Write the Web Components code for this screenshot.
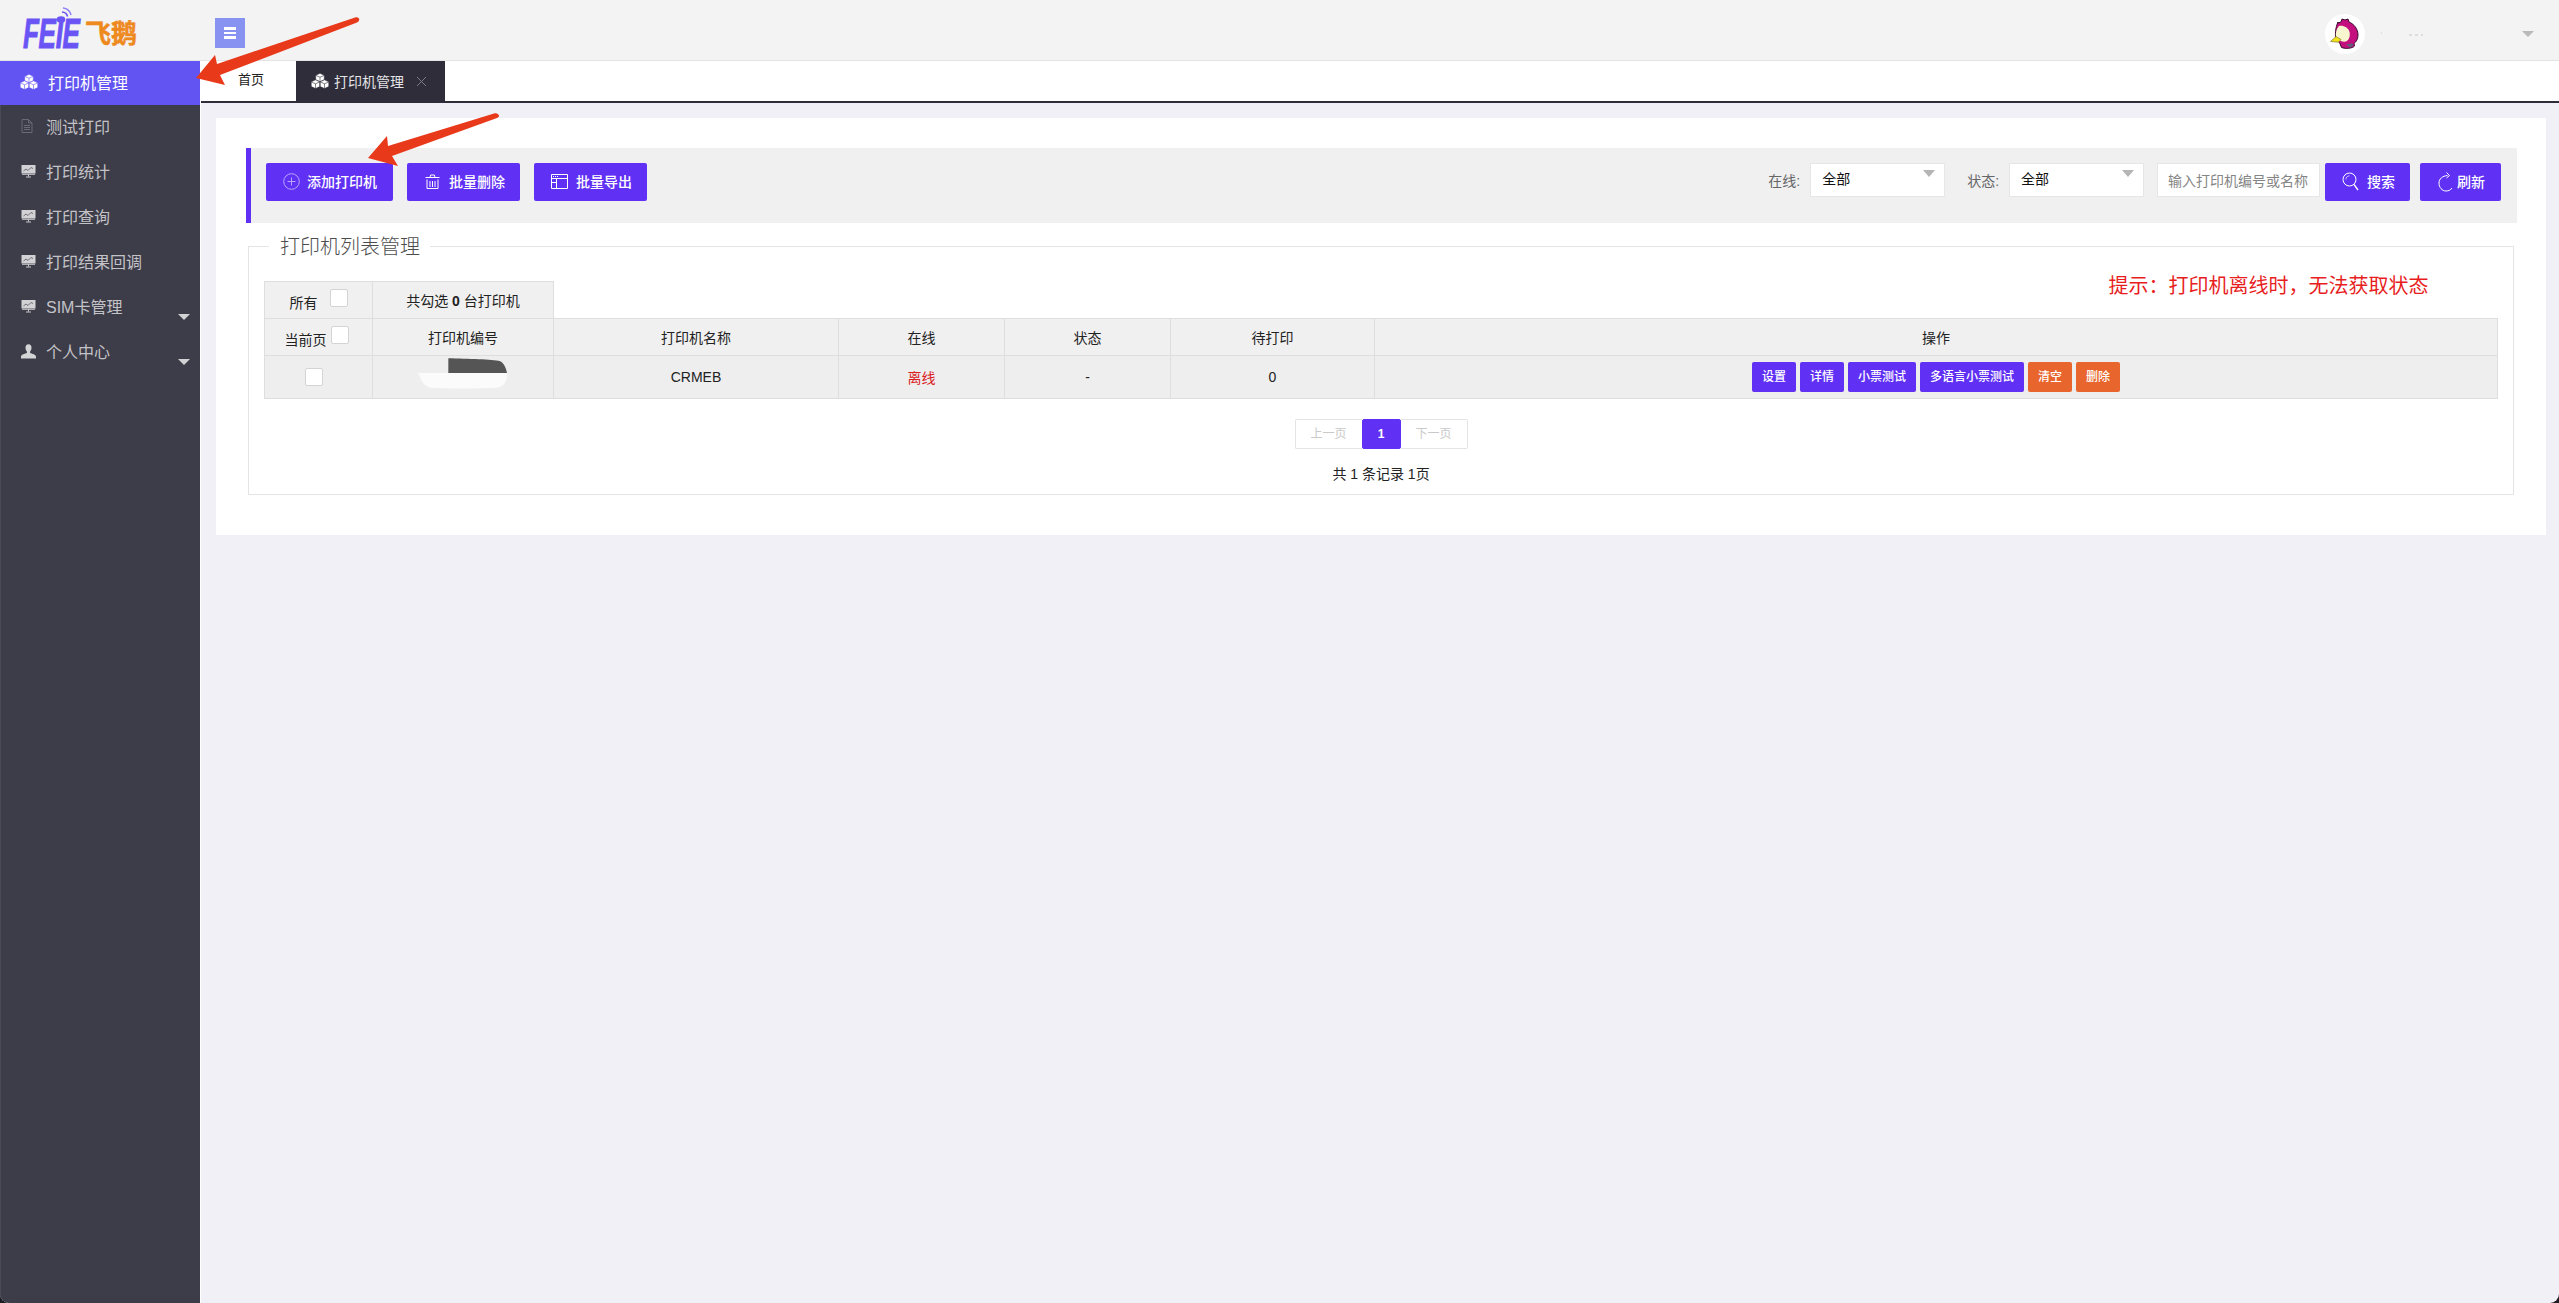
<!DOCTYPE html>
<html lang="zh-CN">
<head>
<meta charset="utf-8">
<title>打印机管理</title>
<style>
html,body{margin:0;height:100%;background:#1d1c22;overflow:hidden}
body{font-family:"Liberation Sans","Noto Sans CJK SC",sans-serif;font-size:14px;color:#222}
</style>
</head>
<body>
<feie-app>
  <feie-header slot="header"></feie-header>
  <feie-sidebar slot="side">
    <side-item active icon="cubes">打印机管理</side-item>
    <side-item icon="doc">测试打印</side-item>
    <side-item icon="chart">打印统计</side-item>
    <side-item icon="chart">打印查询</side-item>
    <side-item icon="chart">打印结果回调</side-item>
    <side-item icon="chart" caret>SIM卡管理</side-item>
    <side-item icon="user" caret>个人中心</side-item>
  </feie-sidebar>
  <feie-tabs slot="tabs"></feie-tabs>
  <feie-card slot="main">
    <feie-toolbar></feie-toolbar>
    <feie-panel></feie-panel>
  </feie-card>
  <feie-arrows slot="over"></feie-arrows>
</feie-app>

<script>
const ICONS = {
  cubes:`<svg width="18" height="16" viewBox="0 0 18 16"><g fill="currentColor" stroke="var(--cut,#6154f2)" stroke-width=".6" stroke-linejoin="round"><path d="M9 .3l4.300 2v4.500L9 8.800 4.700 6.800V2.300z"/><path d="M4.700 2.300L9 4.300l4.300-2M9 4.300v4.500" fill="none"/><path d="M4.500 6.800l4.300 2v4.800l-4.300 2-4.300-2V8.800z"/><path d="M.2 8.800l4.300 2 4.300-2M4.500 10.800v4.800" fill="none"/><path d="M13.500 6.800l4.300 2v4.800l-4.300 2-4.300-2V8.800z"/><path d="M9.200 8.800l4.300 2 4.300-2M13.500 10.800v4.800" fill="none"/></g></svg>`,
  doc:`<svg width="12" height="14" viewBox="0 0 12 14" fill="none" stroke="#6a6975"><path d="M1 .5h6.500L11 4v9.500H1z"/><path d="M7.500.5V4H11M3 6.500h6M3 8.500h6M3 10.500h6"/></svg>`,
  chart:`<svg width="15" height="14" viewBox="0 0 15 14"><path d="M.5 1h14v8.500H.5z" fill="#d2d2d5"/><path d="M2.500 7l2.500-2 2 1.500L10 3.500l2 1" fill="none" stroke="#6e6d77" stroke-width="1"/><path d="M1 10.300h13M7.500 10v2.500M5 13h5" stroke="#c9c9cc" fill="none"/></svg>`,
  user:`<svg width="15" height="15" viewBox="0 0 15 15"><path d="M7.500 .3c2 0 3 1.500 3 3.500 0 1.600-.7 3-1.400 3.800v1.300c1.800.7 5.900 1.600 5.900 3.600v2H0v-2c0-2 4.100-2.900 5.900-3.600V7.600C5.200 6.800 4.500 5.400 4.500 3.800c0-2 1-3.500 3-3.500z" fill="#d4d4d6"/></svg>`,
  plus:`<svg width="17" height="17" viewBox="0 0 17 17" fill="none" stroke="#b9a6fb"><circle cx="8.500" cy="8.500" r="7.800"/><path d="M8.500 4.500v8M4.500 8.500h8"/></svg>`,
  trash:`<svg width="15" height="15" viewBox="0 0 15 15" fill="none" stroke="#fff"><path d="M.5 3.500h14M5 3.500l.6-2.500h3.800l.6 2.500M2 5.500v9h11v-9M5 7v6M7.500 7v6M10 7v6"/></svg>`,
  win:`<svg width="17" height="15" viewBox="0 0 17 15" fill="none" stroke="#fff"><path d="M.5.500h16v14H.5zM.5 4.500h16M5.500 4.500v10M.5 8.500h5"/><path d="M2 2.500h1M4 2.500h1M6 2.500h1" stroke-width="1"/></svg>`,
  search:`<svg width="17" height="19" viewBox="0 0 17 19" fill="none" stroke="#fff"><circle cx="7.500" cy="7.500" r="6.500"/><path d="M3.800 7.500c0-2 1.600-3.700 3.700-3.700" stroke="#c9b9fd"/><path d="M12 12.500l4 5.500" stroke-width="1.300"/></svg>`,
  refresh:`<svg width="15" height="21" viewBox="0 0 15 21" fill="none" stroke="#fff"><path d="M9.500 4.500C4.500 5 1 7.800 1 12c0 4.400 3 8 7 8 2.600 0 4.700-1 6-3"/><path d="M8.500 1.500l3 3-3 2.500" stroke-width="1"/></svg>`
};
function define(name, css, html){
  customElements.define(name, class extends HTMLElement{
    constructor(){super();const r=this.attachShadow({mode:'open'});
      const h=typeof html==='function'?html(this):html;
      r.innerHTML=`<style>${css}</style>${h}`;}
  });
}

define('feie-app',`
  :host{display:grid;grid-template-columns:200px 1fr;grid-template-rows:61px 42px 1fr;width:100%;height:100vh;position:relative;
    border-radius:0 0 9px 9px;overflow:hidden;background:#f0f0f6}
  .h{grid-column:1/3}
  .s{grid-row:2/4;display:flex}
  .t{border-left:1px solid #fff;display:flex}
  .m{border-left:1px solid #fff;padding:15px 15px 0 15px;min-height:0}
`,`<div class="h"><slot name="header"></slot></div>
   <div class="s"><slot name="side"></slot></div>
   <div class="t"><slot name="tabs"></slot></div>
   <div class="m"><slot name="main"></slot></div>
   <slot name="over"></slot>`);

define('feie-header',`
  :host{display:flex;align-items:flex-start;height:61px;box-sizing:border-box;background:#f3f3f4;border-bottom:1px solid #e4e4e6}
  .logo{position:relative;width:215px;height:60px;flex:none;display:flex;align-items:flex-start}
  .fe{display:block;margin:11px 0 0 23px;width:86px;font:italic 700 42px/46px "Liberation Sans",sans-serif;color:#6a55f4;
      -webkit-text-stroke:1px #6a55f4;transform:scaleX(.62);transform-origin:0 0;letter-spacing:-.5px}
  .cn{display:block;margin:17px 0 0 -24px;font:700 26px/30px "Noto Sans CJK SC",sans-serif;color:#ee8a1d;white-space:nowrap;-webkit-text-stroke:.5px #ee8a1d}
  .wifi{position:absolute;left:56px;top:6px}
  .menu{width:30px;height:30px;margin-top:18px;background:#8892f0;display:flex;flex-direction:column;justify-content:center;align-items:center;gap:2px}
  .menu i{display:block;width:12px;height:2.500px;background:#fff}
  .right{margin-left:auto;display:flex;align-items:center;height:60px;padding-right:27px}
  .av{width:40px;height:40px;margin-top:8px}
  .name{width:169px;display:flex;align-items:center;justify-content:flex-end;margin-top:8px}
  .ln{margin-right:91px}
  .caret{width:0;height:0;border:6px solid transparent;border-top:6px solid #b9b9bb;border-bottom:0}
`,`<div class="logo">
     <span class="fe">FEIE</span><span class="cn">飞鹅</span>
     <svg class="wifi" width="18" height="18" viewBox="0 0 18 18" fill="none" stroke="#6a55f4"><ellipse cx="5" cy="13.500" rx="4.300" ry="3.300" fill="#6a55f4" stroke="none"/><path d="M6 6c3 .2 5 2 5.500 4.500" stroke-width="1.700"/><path d="M7 2c4 .4 7 3 8 7" stroke-width="1.500" stroke="#8f80f7"/></svg>
   </div>
   <div class="menu"><i></i><i></i><i></i></div>
   <div class="right">
     <svg class="av" viewBox="0 0 40 40">
       <circle cx="20" cy="20" r="20" fill="#fff"/>
       <path d="M13 9l3-1 1-3 3 1 3-1 1 3c5 2 9 7 9 13 0 4-2 7-4 8.500l.5 2.500c-2 2.500-9 3-13 1.500l-2-5-3-2c-2-5-1-13 1.500-18.500z" fill="#c4107f" stroke="#3a0a2c" stroke-width="1"/>
       <path d="M14 12c4-1 9 1 10.500 6 1 4-.5 8-3.500 9.500-3 .5-7-.5-9.500-3-1.500-4-.5-9 2.500-12.500z" fill="#f8f6cf"/>
       <path d="M11 22.500L5.500 27.500l8 .7 2.500-2.700z" fill="#f2e21a" stroke="#554a10" stroke-width=".5"/>
       <path d="M21 30.500l6-1 1.500 1.500-3 2.500z" fill="#5b6078"/>
     </svg>
     <div class="name"><svg class="ln" width="50" height="6" viewBox="0 0 50 6"><path d="M0 2h1M28 4h3M34 4h3M40 4h2" stroke="#c9c9cb"/></svg><span class="caret"></span></div>
   </div>`);

define('feie-sidebar',`
  :host{display:flex;flex-direction:column;width:200px;background:#3d3c49;box-shadow:inset 1px 0 0 #4a4956}
`,`<slot></slot>`);

define('side-item',`
  :host{display:flex;align-items:center;height:45px;font-size:16px;color:#c3c3c7;white-space:nowrap;box-sizing:border-box;padding:0 0 3px 21px}
  :host([active]){height:44px;background:#6154f2;color:#fff;padding-left:20px;--cut:#6154f2}
  .i{width:25px;flex:none;display:flex;align-items:center}
  :host([active]) .i{width:28px}
  .c{margin-left:auto;margin-right:10px;margin-top:21px;width:0;height:0;border:6px solid transparent;border-top:6px solid #d2d2d5;border-bottom:0}
`,el=>`<span class="i">${ICONS[el.getAttribute('icon')]||''}</span><slot></slot>${el.hasAttribute('caret')?'<span class="c"></span>':''}`);

define('feie-tabs',`
  :host{display:flex;flex:1;height:42px;box-sizing:border-box;background:#fff;border-bottom:2px solid #2f2d3a}
  .home{width:95px;box-sizing:border-box;padding-left:37px;font-size:13px;line-height:38px;color:#222}
  .on{width:149px;box-sizing:border-box;padding-left:15px;background:#2f2d3a;color:#e4e4e6;display:flex;align-items:center;--cut:#2f2d3a;font-size:14px}
  .on svg{flex:none}
  .tx{margin-left:5px}
  .x{margin-left:12px}
`,`<div class="home">首页</div>
   <div class="on"><span style="color:#fff;display:flex">${ICONS.cubes}</span><span class="tx">打印机管理</span>
   <svg class="x" width="11" height="11" viewBox="0 0 11 11" stroke="#7d7c85" fill="none"><path d="M1 1l9 9M10 1l-9 9"/></svg></div>`);

define('feie-card',`
  :host{display:block;background:#fff;padding:30px 29px 40px 30px}
`,`<slot></slot>`);

define('feie-btn',`
  :host{display:inline-flex;align-items:center;box-sizing:border-box;background:var(--b,#6031f5);color:#fff;border-radius:2px;white-space:nowrap;
        height:38px;font-size:14px;font-weight:500;padding-bottom:2px}
  span{display:flex}
`,el=>`<span>${ICONS[el.getAttribute('icon')]||''}</span><slot></slot>`);

define('feie-toolbar',`
  :host{display:flex;align-items:flex-start;height:75px;box-sizing:border-box;background:#f0f0f1;border-left:5px solid #6031f5;padding:15px 16px 0 15px}
  feie-btn{flex:none}
  .add{width:127px;padding-left:17px;gap:7px}
  .del{width:113px;padding-left:18px;margin-left:14px;gap:9px}
  .exp{width:113px;padding-left:17px;margin-left:14px;gap:8px}
  .l{margin-left:auto;line-height:36px;color:#666;font-size:14px;margin-right:10px;white-space:nowrap}
  .l2{margin-left:22px}
  .sel{width:135px;height:34px;box-sizing:border-box;background:#fff;border:1px solid #e6e6e6;padding-left:11px;line-height:31px;color:#111;position:relative;flex:none}
  .sel:after{content:"";position:absolute;right:9px;top:6px;border:6px solid transparent;border-top:7px solid #b5b5b5;border-bottom:0}
  .inp{width:163px;height:34px;box-sizing:border-box;background:#fff;border:1px solid #e6e6e6;padding-left:10px;line-height:34px;color:#858585;margin:0 5px 0 13px;white-space:nowrap;overflow:hidden;flex:none}
  .s{width:85px;padding-left:17px;gap:8px}
  .r{width:81px;padding-left:18px;margin-left:10px;gap:4px}
`,`<feie-btn class="add" icon="plus">添加打印机</feie-btn>
   <feie-btn class="del" icon="trash">批量删除</feie-btn>
   <feie-btn class="exp" icon="win">批量导出</feie-btn>
   <span class="l">在线:</span><div class="sel">全部</div>
   <span class="l l2">状态:</span><div class="sel">全部</div>
   <div class="inp">输入打印机编号或名称</div>
   <feie-btn class="s" icon="search">搜索</feie-btn>
   <feie-btn class="r" icon="refresh">刷新</feie-btn>`);

define('feie-check',`
  :host{display:inline-block;flex:none;width:18px;height:18px;box-sizing:border-box;background:#fff;border:1px solid #d4d4d4;border-radius:2px}
`,``);

define('feie-panel',`
  :host{display:block;margin:9px 3px 0 2px}
  fieldset{margin:0;padding:0 15px 5px;border:1px solid #e4e4e4;min-width:0}
  legend{margin-left:5px;padding:2px 10px 0 11px;font:300 20px/26px "Liberation Sans","Noto Sans CJK SC",sans-serif;color:#4c4c4c}
  table{border-collapse:collapse;table-layout:fixed;width:2233px;margin-top:21px;font-size:14px;color:#222}
  td{border:1px solid #dedede;background:#f0f0f0;text-align:center;padding:0;height:36px;vertical-align:middle}
  tr.d td{background:#eee;height:42px}
  td.hint{border:0;background:none;color:#e81d1d;font-size:20px;line-height:28px;text-align:right;padding:0 69px 0 0;vertical-align:top}
  td.hint div{margin-top:-10px}
  .chk{display:flex;align-items:center;justify-content:center}
  .chk span{margin-top:4px}
  .chk feie-check{margin-bottom:5px}
  .blob{display:block;margin:0 auto 8px}
  .off{color:#d9201c}
  .ops{display:flex;justify-content:center;gap:4px}
  .ops b{display:block;font-weight:500;font-size:12px;line-height:30px;height:30px;color:#fff;background:#6031f5;border-radius:2px;text-align:center}
  .ops b.o{background:#e8652d}
  .pager{display:flex;justify-content:center;margin-top:20px;font-size:12px;color:#c9c9c9}
  .pager span{box-sizing:border-box;height:30px;line-height:28px;text-align:center;border:1px solid #e4e4e6}
  .pager .p{width:67px;border-right:0;border-radius:2px 0 0 2px}
  .pager .n{width:67px;border-left:0;border-radius:0 2px 2px 0}
  .pager .a{width:39px;background:#6031f5;color:#fff;border-color:#6031f5;border-radius:2px;font-weight:700}
  .sum{margin-top:10px;text-align:center;line-height:30px;font-size:14px;color:#222}
`,`<fieldset><legend>打印机列表管理</legend>
  <table>
    <colgroup><col width="108"><col width="181"><col width="285"><col width="166"><col width="166"><col width="204"><col width="1123"></colgroup>
    <tr><td><div class="chk"><span style="margin-right:12px">所有</span><feie-check></feie-check></div></td>
        <td>共勾选 <b>0</b> 台打印机</td>
        <td class="hint" colspan="5"><div>提示：打印机离线时，无法获取状态</div></td></tr>
    <tr><td><div class="chk" style="padding-right:4px"><span style="margin-right:4px">当前页</span><feie-check></feie-check></div></td>
        <td>打印机编号</td><td>打印机名称</td><td>在线</td><td>状态</td><td>待打印</td><td>操作</td></tr>
    <tr class="d"><td><div class="chk" style="padding-right:10px"><feie-check style="margin:0"></feie-check></div></td>
        <td><svg class="blob" width="90" height="31" viewBox="0 0 92 31"><path d="M31 0c20 .5 45 1 53 3 4 2 6 7 7 12H31z" fill="#555"/><path d="M0 15h91c1 7-3 14-10 15-20 1-50 1-68 0C6 29 3 22 0 15z" fill="#fbfbfb"/></svg></td>
        <td>CRMEB</td><td class="off">离线</td><td>-</td><td>0</td>
        <td><div class="ops"><b style="width:44px">设置</b><b style="width:44px">详情</b><b style="width:68px">小票测试</b><b style="width:104px">多语言小票测试</b><b class="o" style="width:44px">清空</b><b class="o" style="width:44px">删除</b></div></td></tr>
  </table>
  <div class="pager"><span class="p">上一页</span><span class="a">1</span><span class="n">下一页</span></div>
  <div class="sum">共 1 条记录 1页</div>
</fieldset>`);

define('feie-arrows',`
  :host{position:absolute;left:0;top:0;width:100%;height:100%;pointer-events:none}
  svg{position:absolute;left:0;top:0}
`,`<svg width="600" height="200" viewBox="0 0 600 200" fill="#e8391a">
    <path d="M196 78L215 55l2 9L355 17.500c3-1 5 1 4 3-.5 1-1 1.500-2 2L220 75l5 10z"/>
    <path d="M368 158L387 136l1 10L494 113.500c3-1 5 1 5 2.500 0 1-1 1.500-2 2L392 156l6 10z"/>
  </svg>`);
</script>
</body>
</html>
